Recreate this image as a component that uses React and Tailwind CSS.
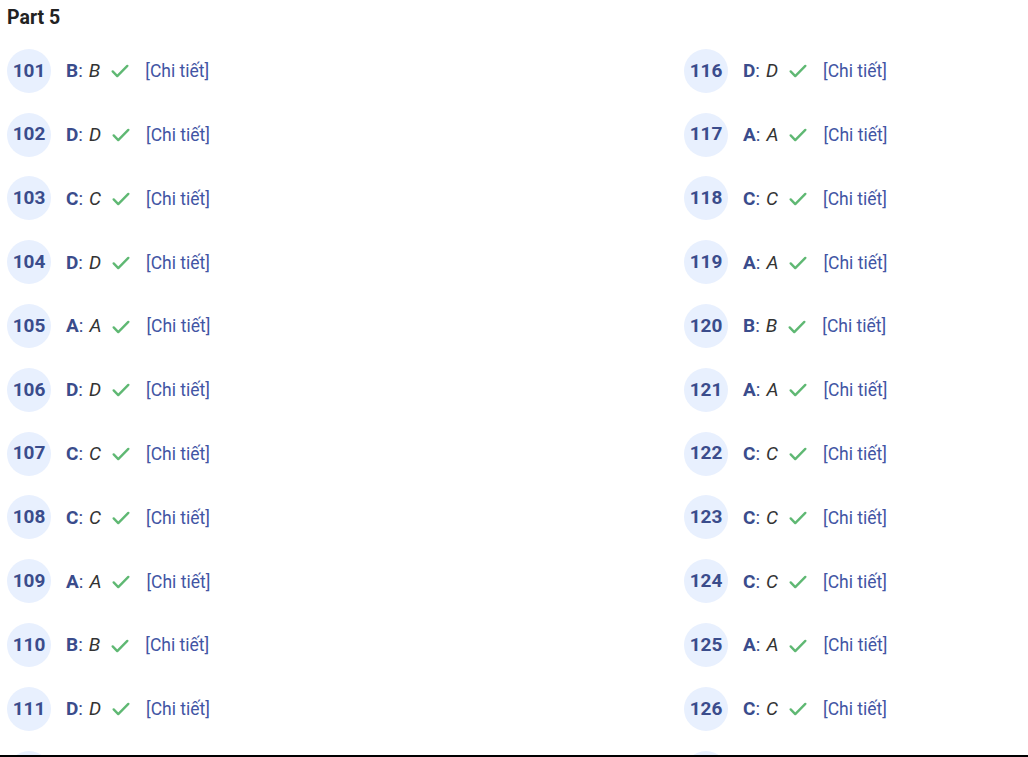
import React from "react";

const left = [
  [101, "B"], [102, "D"], [103, "C"], [104, "D"], [105, "A"], [106, "D"],
  [107, "C"], [108, "C"], [109, "A"], [110, "B"], [111, "D"], [112, "A"],
];
const right = [
  [116, "D"], [117, "A"], [118, "C"], [119, "A"], [120, "B"], [121, "A"],
  [122, "C"], [123, "C"], [124, "C"], [125, "A"], [126, "C"], [127, "B"],
];

function Check() {
  return (
    <svg width="22" height="22" viewBox="0 0 24 24" fill="none" stroke="#5fb873" strokeWidth="2.6" strokeLinecap="round" strokeLinejoin="round">
      <path d="M4 12.5l5 5L20 6.5" />
    </svg>
  );
}

function Row({ n, a }) {
  return (
    <div className="flex items-center h-[63.8px]">
      <div className="w-[44px] h-[44px] rounded-full bg-[#e8f0fe] flex items-center justify-center text-[19px] font-bold text-[#3a4c8c]">
        {n}
      </div>
      <div className="ml-[15px] flex items-center text-[19px] pt-[1px]">
        <span className="font-bold text-[#3a4c8c]">{a}</span>
        <span className="text-[#3a4c8c]">:</span>
        <span className="italic text-[#333] ml-[6px]">{a}</span>
        <span className="ml-[9px] flex items-center"><Check /></span>
        <span className="ml-[14px] text-[17.5px] text-[#4255a4]">[Chi tiết]</span>
      </div>
    </div>
  );
}

export default function App() {
  return (
    <div className="w-[1028px] h-[757px] overflow-hidden bg-white relative" style={{ fontFamily: "Roboto, 'Liberation Sans', sans-serif" }}>
      <div className="pl-[7px] pt-[6px]">
        <div className="text-[19.5px] font-bold text-[#222] h-[33px] leading-[24px]">Part 5</div>
        <div className="grid grid-cols-[677px_1fr]">
          <div>
            {left.map(([n, a]) => <Row key={n} n={n} a={a} />)}
          </div>
          <div>
            {right.map(([n, a]) => <Row key={n} n={n} a={a} />)}
          </div>
        </div>
      </div>
      <div className="absolute left-0 right-0 bottom-0 h-[2px] bg-black" />
    </div>
  );
}
